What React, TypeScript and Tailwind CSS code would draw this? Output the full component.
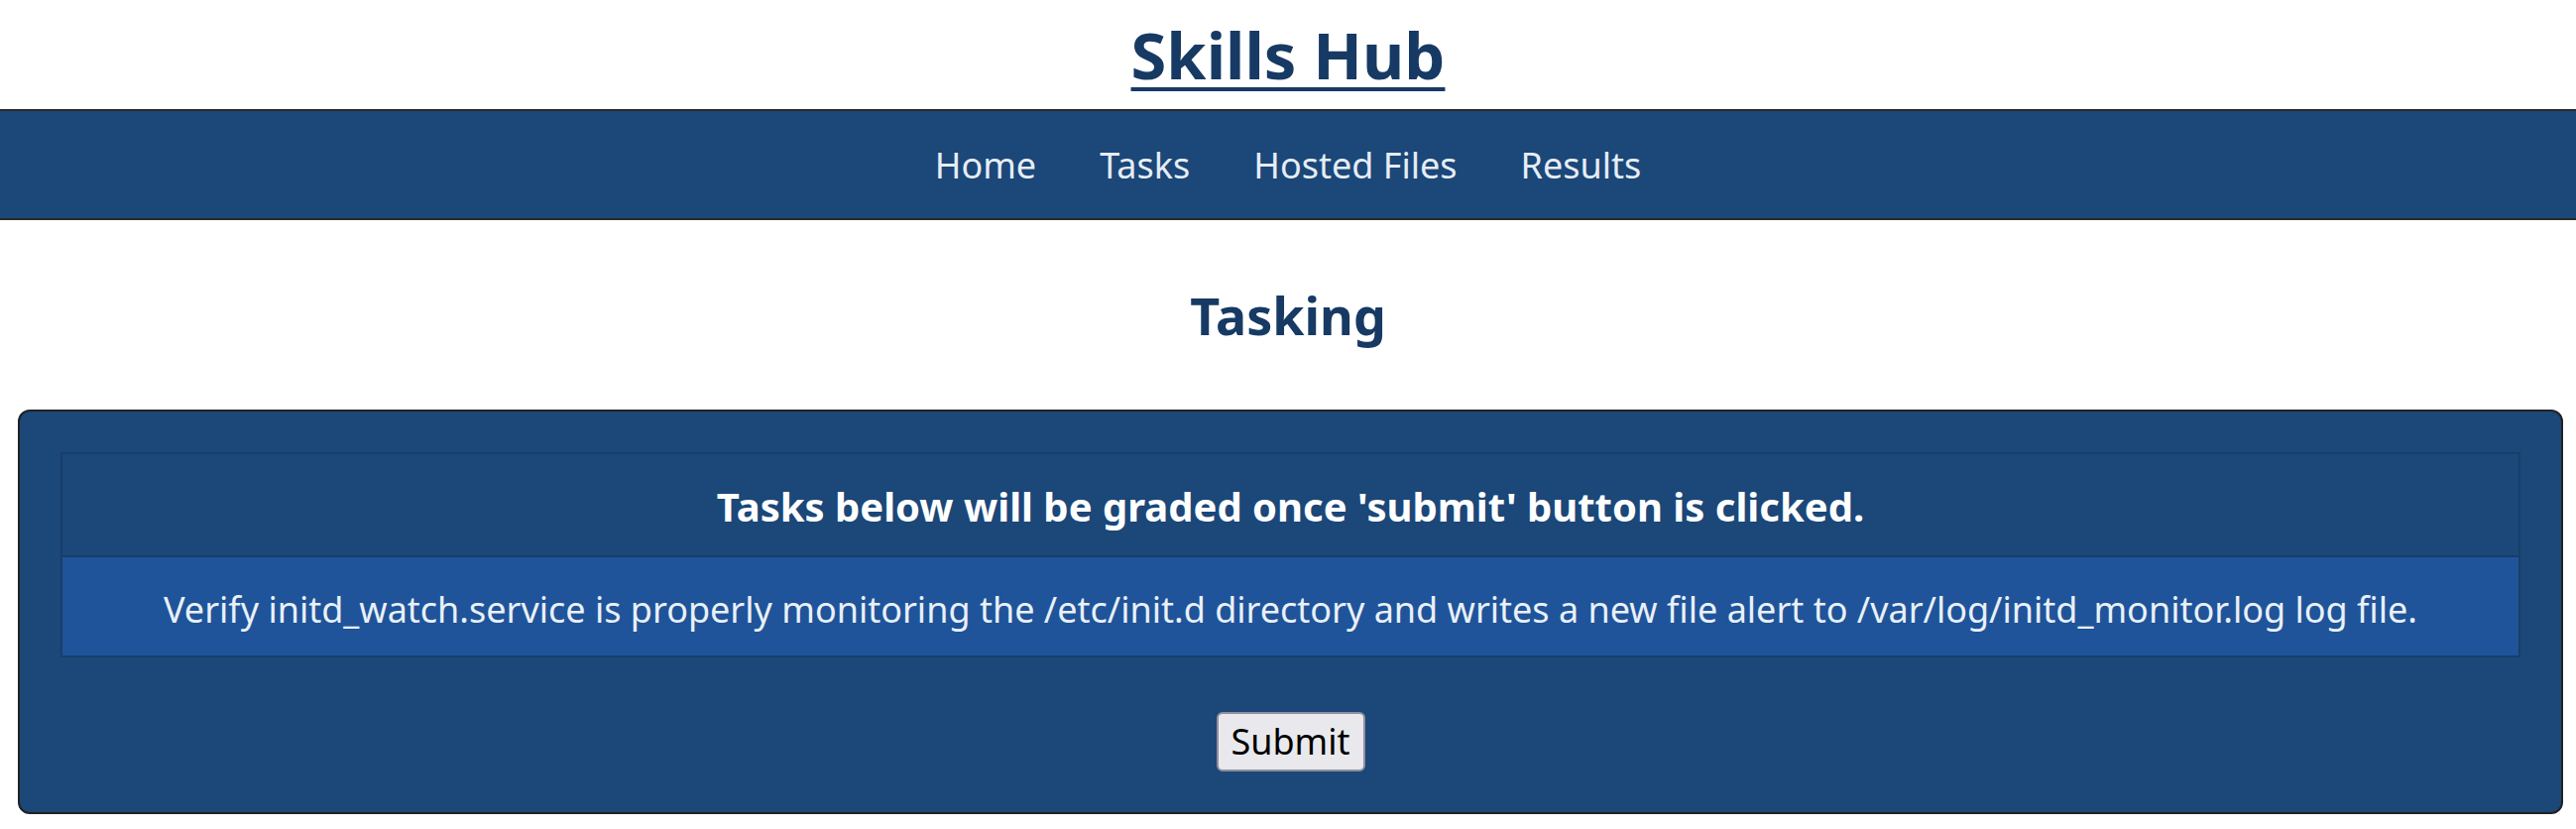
const NAV_ITEMS = ["Home", "Tasks", "Hosted Files", "Results"];

export default function App() {
  return (
    <div className="min-h-screen bg-white font-['Noto_Sans',sans-serif]">
      <header className="flex h-[110px] items-start justify-center">
        <h1 className="mt-[13px] text-[65px] leading-[84px] font-bold text-[#163a63] underline decoration-[4px] underline-offset-[8px]">
          Skills Hub
        </h1>
      </header>

      <nav className="flex h-[112px] items-center justify-center border-y-2 border-[#2a2a2a] bg-[#1b4779] pt-[2px]">
        {NAV_ITEMS.map((item) => (
          <a
            key={item}
            className="px-[32px] text-[36px] text-[#e6edf5]"
            href="#"
          >
            {item}
          </a>
        ))}
      </nav>

      <h2 className="mt-[60px] text-center text-[52px] leading-[72px] font-bold text-[#163a63]">
        Tasking
      </h2>

      <main className="mt-[59px] ml-[18px] mr-[13px] rounded-[12px] border-2 border-[#222] bg-[#1b4779] px-[41px] pt-[41px] pb-[41px]">
        <div className="border-2 border-[#183e69]">
          <div className="flex h-[104px] items-center justify-center border-b-2 border-[#183e69] bg-[#1b4779] pt-[4px]">
            <p className="text-[40px] font-bold text-white">
              Tasks below will be graded once 'submit' button is clicked.
            </p>
          </div>
          <div className="flex h-[99px] items-center justify-center bg-[#1f549a] pt-[6px]">
            <p className="text-[36px] text-[#eaf0f7]">
              Verify initd_watch.service is properly monitoring the /etc/init.d
              directory and writes a new file alert to /var/log/initd_monitor.log
              log file.
            </p>
          </div>
        </div>

        <div className="mt-[55px] flex justify-center">
          <button className="h-[60px] w-[150px] rounded-[6px] border-2 border-[#8f8f9d] bg-[#e9e9ed] text-[36px] leading-none text-black">
            Submit
          </button>
        </div>
      </main>
    </div>
  );
}
